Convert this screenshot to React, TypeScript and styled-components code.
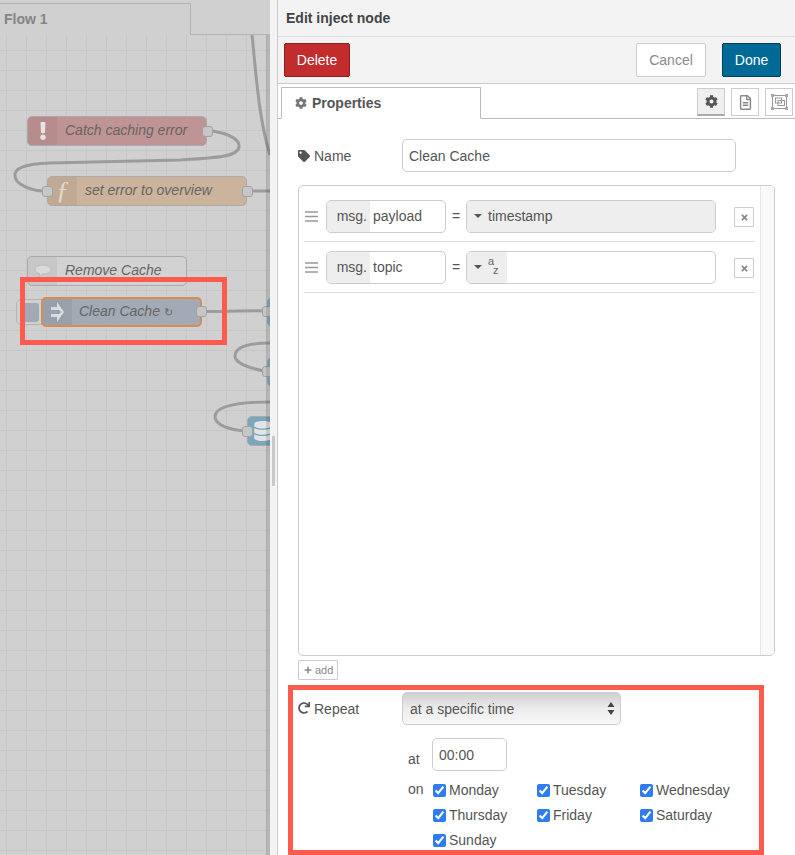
import React from 'react';
import styled, { createGlobalStyle } from 'styled-components';
import {
  FaCog,
  FaDatabase,
  FaExclamation,
  FaPlus,
  FaRedo,
  FaRegFileAlt,
  FaTag,
  FaTimes,
} from 'react-icons/fa';

const GlobalStyle = createGlobalStyle`
  html, body {
    margin: 0;
    padding: 0;
    background: #fff;
  }
  body {
    font-family: "Liberation Sans", Arial, sans-serif;
    font-size: 14px;
    color: #555;
  }
  * {
    box-sizing: border-box;
  }
`;

const Page = styled.div`
  position: relative;
  display: flex;
  width: 795px;
  height: 855px;
  overflow: hidden;
`;

/* ---------- workspace (dimmed behind the tray) ---------- */

const Workspace = styled.div`
  display: flex;
  flex-direction: column;
  width: 270px;
  flex-shrink: 0;
  background: #d0d0d0;
`;

const FlowTabs = styled.div`
  display: flex;
  align-items: flex-end;
  height: 35px;
  padding-top: 3px;
  border-bottom: 1px solid #b4b4b4;
  flex-shrink: 0;
`;

const FlowTab = styled.div`
  width: 191px;
  height: 32px;
  margin-bottom: -1px;
  padding: 7px 0 0 4px;
  border-top: 1px solid #b4b4b4;
  border-right: 1px solid #b4b4b4;
  background: #d0d0d0;
  font-weight: bold;
  color: #858585;
`;

const Canvas = styled.div`
  position: relative;
  flex: 1;
  overflow: hidden;
  background-color: #d0d0d0;
  background-image: linear-gradient(#c7c7c7 1px, transparent 1px),
    linear-gradient(90deg, #c7c7c7 1px, transparent 1px);
  background-size: 20px 20px;
  background-position: 6px 15px;
  &::after {
    content: '';
    position: absolute;
    top: 0;
    right: 0;
    bottom: 0;
    width: 4px;
    background: rgba(0, 0, 0, 0.12);
  }
`;

const Wires = styled.svg`
  position: absolute;
  left: 0;
  top: -35px;
  width: 270px;
  height: 855px;
  fill: none;
  stroke: #9c9c9c;
  stroke-width: 3;
`;

interface NodeProps {
  $x: number;
  $y: number;
  $w: number;
  $bg: string;
  $border?: string;
}

const FlowNode = styled.div<NodeProps>`
  position: absolute;
  left: ${(p) => p.$x}px;
  top: ${(p) => p.$y - 35}px;
  width: ${(p) => p.$w}px;
  height: 30px;
  display: flex;
  align-items: center;
  background: ${(p) => p.$bg};
  border: ${(p) => (p.$border ? `2px solid ${p.$border}` : '1px solid #aaa')};
  border-radius: 5px;
`;

const NodeIcon = styled.div`
  display: flex;
  align-items: center;
  justify-content: center;
  align-self: stretch;
  width: 29px;
  flex-shrink: 0;
  background: rgba(0, 0, 0, 0.05);
  border-radius: 4px 0 0 4px;
  color: #e4e4e4;
`;

const NodeLabel = styled.span`
  margin-left: 8px;
  padding-bottom: 2px;
  font-style: italic;
  color: #666;
  white-space: nowrap;
`;

const SelectedIconLabel = styled(NodeLabel)`
  margin-left: 7px;
`;

const LoopMark = styled.span`
  font-size: 11px;
  font-style: normal;
`;

const FunctionGlyph = styled.span`
  font-family: "Liberation Serif", serif;
  font-style: italic;
  font-size: 26px;
  line-height: 1;
  color: #e2d9cd;
`;

const Port = styled.div<{ $x: number; $y: number }>`
  position: absolute;
  left: ${(p) => p.$x}px;
  top: ${(p) => p.$y - 35}px;
  width: 11px;
  height: 11px;
  background: #c6c6c6;
  border: 1px solid #a2a2a2;
  border-radius: 3px;
`;

const InjectButton = styled.div`
  position: absolute;
  left: 16px;
  top: 264px;
  width: 28px;
  height: 26px;
  padding: 3px 0 0 5px;
  background: #d0d0d0;
  border: 1px solid #b4b4b4;
  border-radius: 5px 0 0 5px;
`;

const InjectFace = styled.div`
  width: 17px;
  height: 19px;
  background: #a1aab5;
  border-radius: 3px;
`;

const Gutter = styled.div`
  position: relative;
  width: 8px;
  flex-shrink: 0;
  background: #f3f3f3;
  border-right: 1px solid #ccc;
`;

const GutterGrip = styled.div`
  position: absolute;
  left: 2px;
  top: 436px;
  width: 3px;
  height: 50px;
  background: #c9c9c9;
`;

/* ---------- edit tray ---------- */

const Tray = styled.div`
  display: flex;
  flex-direction: column;
  flex: 1;
  min-width: 0;
  background: #fff;
`;

const TrayTitle = styled.div`
  height: 37px;
  padding: 10px 0 0 8px;
  background: #f3f3f3;
  border-bottom: 1px solid #ddd;
  font-weight: bold;
  font-size: 14px;
  color: #444;
`;

const TrayToolbar = styled.div`
  display: flex;
  align-items: center;
  justify-content: space-between;
  height: 47px;
  padding: 0 14px 1px 6px;
  background: #f3f3f3;
  border-bottom: 1px solid #ccc;
`;

const ToolbarGroup = styled.div`
  display: flex;
  gap: 16px;
`;

const TrayButton = styled.button<{ $kind: 'delete' | 'cancel' | 'done' }>`
  height: 34px;
  padding: 0;
  font-family: inherit;
  font-size: 14px;
  border-radius: 2px;
  width: ${(p) => (p.$kind === 'delete' ? 66 : p.$kind === 'cancel' ? 70 : 59)}px;
  background: ${(p) =>
    p.$kind === 'delete' ? '#c22c2c' : p.$kind === 'cancel' ? '#fff' : '#006a97'};
  color: ${(p) => (p.$kind === 'cancel' ? '#8a8a8a' : '#fff')};
  border: 1px solid
    ${(p) => (p.$kind === 'delete' ? '#8f1f1f' : p.$kind === 'cancel' ? '#ccc' : '#00405c')};
`;

const TabRow = styled.div`
  display: flex;
  align-items: flex-end;
  justify-content: space-between;
  height: 35px;
  padding: 0 2px 0 3px;
  border-bottom: 1px solid #bbb;
`;

const PropertiesTab = styled.div`
  display: flex;
  align-items: center;
  gap: 5px;
  width: 200px;
  height: 32px;
  margin-bottom: -1px;
  padding-left: 13px;
  background: #fff;
  border: 1px solid #bbb;
  border-bottom: 1px solid #fff;
  font-weight: bold;
  color: #555;
  svg {
    color: #777;
  }
`;

const TabIcons = styled.div`
  display: flex;
  gap: 6px;
  margin-bottom: 2px;
`;

const TabIcon = styled.div<{ $active?: boolean }>`
  display: flex;
  align-items: center;
  justify-content: center;
  width: 28px;
  height: 28px;
  background: ${(p) => (p.$active ? '#efefef' : '#fff')};
  border: 1px solid #ccc;
  border-bottom: ${(p) => (p.$active ? '2px solid #aaa' : '1px solid #ccc')};
  color: ${(p) => (p.$active ? '#555' : '#888')};
`;

const Form = styled.div`
  flex: 1;
  padding: 20px 20px 0;
`;

const NameRow = styled.div`
  display: flex;
  align-items: center;
  height: 33px;
`;

const RowLabel = styled.label`
  display: flex;
  align-items: center;
  gap: 4px;
  width: 104px;
  flex-shrink: 0;
  color: #555;
`;

const TextInput = styled.input<{ $width: number }>`
  width: ${(p) => p.$width}px;
  height: 33px;
  padding: 0 6px;
  font-family: inherit;
  font-size: 14px;
  color: #555;
  background: #fff;
  border: 1px solid #ccc;
  border-radius: 5px;
  outline: none;
`;

const ListBox = styled.div`
  display: flex;
  height: 471px;
  margin-top: 13px;
  width: 477px;
  border: 1px solid #ccc;
  border-radius: 5px;
  overflow: hidden;
`;

const ListContent = styled.div`
  flex: 1;
  padding: 5px 5px 0;
`;

const ListScrollbar = styled.div`
  width: 15px;
  background: #f9f9f9;
  border-left: 1px solid #e6e6e6;
`;

const PropRow = styled.div`
  display: flex;
  align-items: center;
  height: 51px;
  padding: 0 1px;
  border-bottom: 1px solid #ddd;
`;

const DragHandle = styled.svg`
  width: 13px;
  height: 11px;
  margin-right: 8px;
  flex-shrink: 0;
  stroke: #999;
  stroke-width: 1.4;
`;

const FieldBox = styled.div<{ $width: number }>`
  display: flex;
  align-items: stretch;
  width: ${(p) => p.$width}px;
  height: 33px;
  flex-shrink: 0;
  border: 1px solid #ccc;
  border-radius: 5px;
  overflow: hidden;
  color: #555;
`;

const MsgPrefix = styled.div`
  display: flex;
  align-items: center;
  justify-content: flex-end;
  width: 43px;
  padding-right: 3px;
  background: #eee;
`;

const FieldValue = styled.div`
  display: flex;
  align-items: center;
  flex: 1;
  padding-left: 3px;
`;

const Equals = styled.div`
  width: 20px;
  flex-shrink: 0;
  text-align: center;
  color: #555;
`;

const TypeButton = styled.div<{ $fill?: boolean }>`
  display: flex;
  align-items: center;
  gap: 6px;
  padding-left: 7px;
  background: #eee;
  flex: ${(p) => (p.$fill ? 1 : '0 0 40px')};
`;

const Caret = styled.span`
  width: 0;
  height: 0;
  border-left: 4px solid transparent;
  border-right: 4px solid transparent;
  border-top: 4px solid #555;
`;

const TypeGlyph = styled.span`
  display: flex;
  flex-direction: column;
  margin-top: -2px;
  font-size: 11px;
  line-height: 9px;
  color: #666;
  span:last-child {
    margin-left: 5px;
  }
`;

const RemoveButton = styled.button`
  display: flex;
  align-items: center;
  justify-content: center;
  width: 20px;
  height: 20px;
  margin: 2px 0 0 18px;
  padding: 0;
  background: #fff;
  border: 1px solid #ccc;
  border-radius: 1px;
  color: #888;
`;

const AddButton = styled.button`
  display: flex;
  align-items: center;
  gap: 3px;
  width: 40px;
  height: 20px;
  margin-top: 4px;
  padding: 0 0 0 5px;
  font-family: inherit;
  font-size: 11px;
  color: #888;
  background: #fff;
  border: 1px solid #ccc;
  border-radius: 1px;
`;

const RepeatRow = styled.div`
  display: flex;
  margin-top: 12px;
`;

const RepeatLabel = styled(RowLabel)`
  align-items: flex-start;
  padding-top: 9px;
  svg {
    margin-top: 1px;
  }
`;

const SelectWrap = styled.div`
  position: relative;
  width: 219px;
  height: 33px;
`;

const RepeatSelect = styled.select`
  appearance: none;
  width: 100%;
  height: 100%;
  padding: 0 7px;
  font-family: inherit;
  font-size: 14px;
  color: #555;
  background: linear-gradient(#cfcfcf, #ececec 50%, #f8f8f8);
  border: 1px solid #ccc;
  border-radius: 5px;
  outline: none;
`;

const SelectArrows = styled.svg`
  position: absolute;
  right: 6px;
  top: 10px;
  width: 8px;
  height: 13px;
  fill: #444;
  pointer-events: none;
`;

const AtRow = styled.div`
  display: flex;
  align-items: center;
  margin: 13px 0 0 110px;
`;

const InlineLabel = styled.span`
  width: 24px;
  flex-shrink: 0;
`;

const AtLabel = styled(InlineLabel)`
  padding-top: 8px;
`;

const OnRow = styled.div`
  display: flex;
  margin: 6px 0 0 110px;
`;

const OnLabel = styled(InlineLabel)`
  line-height: 25px;
`;

const DaysGrid = styled.div`
  display: grid;
  grid-template-columns: 104px 103px 110px;
  grid-auto-rows: 25px;
`;

const Day = styled.label`
  display: flex;
  align-items: center;
  gap: 3px;
  white-space: nowrap;
  color: #555;
  input {
    width: 13px;
    height: 13px;
    margin: 1px 0 0 1px;
    accent-color: #2f7bf0;
  }
`;

const Highlight = styled.div<{ $x: number; $y: number; $w: number; $h: number }>`
  position: absolute;
  left: ${(p) => p.$x}px;
  top: ${(p) => p.$y}px;
  width: ${(p) => p.$w}px;
  height: ${(p) => p.$h}px;
  border: 5px solid #ff5a4e;
  pointer-events: none;
`;

const DAYS = ['Monday', 'Tuesday', 'Wednesday', 'Thursday', 'Friday', 'Saturday', 'Sunday'];

const FrameIcon = () => (
  <svg width="17" height="16" viewBox="0 0 17 16" fill="none" stroke="#999" strokeWidth="1">
    <rect x="1.500" y="1.500" width="14" height="13" />
    <rect x="4.500" y="4" width="6" height="5" />
    <rect x="7" y="6.500" width="6.500" height="5" />
    <rect x="0" y="0" width="3" height="3" fill="#aaa" stroke="none" />
    <rect x="14" y="0" width="3" height="3" fill="#aaa" stroke="none" />
    <rect x="0" y="13" width="3" height="3" fill="#aaa" stroke="none" />
    <rect x="14" y="13" width="3" height="3" fill="#aaa" stroke="none" />
  </svg>
);

const InjectArrow = () => (
  <svg width="13" height="20" viewBox="0 0 13 20" fill="#dcdcdc">
    <path d="M0 5h6V0l7 10-7 10v-5H0v-3h8l2-2-2-2H0z" />
  </svg>
);

const CommentBubble = () => (
  <svg width="18" height="14" viewBox="0 0 18 14" fill="#dadada" stroke="#bbb">
    <path d="M9 1c4.400 0 8 1.700 8 4.500S13.400 10 9 10H8l-3 3 .5-3.500C3 9 1 7.500 1 5.500 1 2.700 4.600 1 9 1z" />
  </svg>
);

const Handle = () => (
  <DragHandle viewBox="0 0 13 11">
    <path d="M0 1h13M0 5.500h13M0 10h13" />
  </DragHandle>
);

const App: React.FC = () => {
  return (
    <Page>
      <GlobalStyle />
      <Workspace>
        <FlowTabs>
          <FlowTab>Flow 1</FlowTab>
        </FlowTabs>
        <Canvas>
          <Wires viewBox="0 0 270 855">
            <path d="M252 34C256 75 259 120 270 155" />
            <path d="M212 131C232 134 240 141 239 147C238 157 215 158 180 160L50 163C25 164 14 168 15 176C15 184 30 190 42 191" />
            <path d="M252 191H270" />
            <path d="M206 311.500C230 312 250 310 267 311" />
            <path d="M270 343C245 343 235 348 235 356C235 364 250 368 264 371" />
            <path d="M270 402C240 402 215 405 215 417C215 425 230 430 246 431" />
          </Wires>

          <FlowNode $x={27} $y={116} $w={180} $bg="#c09495">
            <NodeIcon>
              <FaExclamation size={18} />
            </NodeIcon>
            <NodeLabel>Catch caching error</NodeLabel>
          </FlowNode>
          <Port $x={202} $y={126} />

          <FlowNode $x={47} $y={176} $w={200} $bg="#ccb39b">
            <NodeIcon>
              <FunctionGlyph>ƒ</FunctionGlyph>
            </NodeIcon>
            <NodeLabel>set error to overview</NodeLabel>
          </FlowNode>
          <Port $x={42} $y={186} />
          <Port $x={242} $y={186} />

          <FlowNode $x={27} $y={256} $w={160} $bg="#d2d2d2">
            <NodeIcon>
              <CommentBubble />
            </NodeIcon>
            <NodeLabel>Remove Cache</NodeLabel>
          </FlowNode>

          <InjectButton>
            <InjectFace />
          </InjectButton>
          <FlowNode $x={41} $y={297} $w={161} $bg="#a1aab5" $border="#d58c55">
            <NodeIcon>
              <InjectArrow />
            </NodeIcon>
            <SelectedIconLabel>
              Clean Cache <LoopMark>↻</LoopMark>
            </SelectedIconLabel>
          </FlowNode>
          <Port $x={196} $y={306} />

          <FlowNode $x={267} $y={297} $w={60} $bg="#7fb0c9" />
          <Port $x={262} $y={306} />
          <FlowNode $x={267} $y={357} $w={60} $bg="#7fb0c9" />
          <Port $x={262} $y={366} />
          <FlowNode $x={247} $y={416} $w={60} $bg="#7fb0c9">
            <NodeIcon>
              <FaDatabase size={20} />
            </NodeIcon>
          </FlowNode>
          <Port $x={242} $y={426} />
        </Canvas>
      </Workspace>

      <Gutter>
        <GutterGrip />
      </Gutter>

      <Tray>
        <TrayTitle>Edit inject node</TrayTitle>
        <TrayToolbar>
          <TrayButton $kind="delete">Delete</TrayButton>
          <ToolbarGroup>
            <TrayButton $kind="cancel">Cancel</TrayButton>
            <TrayButton $kind="done">Done</TrayButton>
          </ToolbarGroup>
        </TrayToolbar>

        <TabRow>
          <PropertiesTab>
            <FaCog size={12} />
            Properties
          </PropertiesTab>
          <TabIcons>
            <TabIcon $active>
              <FaCog size={13} />
            </TabIcon>
            <TabIcon>
              <FaRegFileAlt size={15} />
            </TabIcon>
            <TabIcon>
              <FrameIcon />
            </TabIcon>
          </TabIcons>
        </TabRow>

        <Form>
          <NameRow>
            <RowLabel>
              <FaTag size={12} />
              Name
            </RowLabel>
            <TextInput $width={334} defaultValue="Clean Cache" />
          </NameRow>

          <ListBox>
            <ListContent>
              <PropRow>
                <Handle />
                <FieldBox $width={120}>
                  <MsgPrefix>msg.</MsgPrefix>
                  <FieldValue>payload</FieldValue>
                </FieldBox>
                <Equals>=</Equals>
                <FieldBox $width={250}>
                  <TypeButton $fill>
                    <Caret />
                    timestamp
                  </TypeButton>
                </FieldBox>
                <RemoveButton>
                  <FaTimes size={9} />
                </RemoveButton>
              </PropRow>
              <PropRow>
                <Handle />
                <FieldBox $width={120}>
                  <MsgPrefix>msg.</MsgPrefix>
                  <FieldValue>topic</FieldValue>
                </FieldBox>
                <Equals>=</Equals>
                <FieldBox $width={250}>
                  <TypeButton>
                    <Caret />
                    <TypeGlyph>
                      <span>a</span>
                      <span>z</span>
                    </TypeGlyph>
                  </TypeButton>
                  <FieldValue />
                </FieldBox>
                <RemoveButton>
                  <FaTimes size={9} />
                </RemoveButton>
              </PropRow>
            </ListContent>
            <ListScrollbar />
          </ListBox>

          <AddButton>
            <FaPlus size={8} />
            add
          </AddButton>

          <RepeatRow>
            <RepeatLabel>
              <FaRedo size={12} />
              Repeat
            </RepeatLabel>
            <SelectWrap>
              <RepeatSelect defaultValue="time">
                <option value="time">at a specific time</option>
              </RepeatSelect>
              <SelectArrows viewBox="0 0 8 13">
                <path d="M4 0l3.500 5H.5zM4 13L.5 8h7z" />
              </SelectArrows>
            </SelectWrap>
          </RepeatRow>

          <AtRow>
            <AtLabel>at</AtLabel>
            <TextInput $width={75} defaultValue="00:00" />
          </AtRow>

          <OnRow>
            <OnLabel>on</OnLabel>
            <DaysGrid>
              {DAYS.map((day) => (
                <Day key={day}>
                  <input type="checkbox" defaultChecked />
                  {day}
                </Day>
              ))}
            </DaysGrid>
          </OnRow>
        </Form>
      </Tray>

      <Highlight $x={20} $y={277} $w={207} $h={68} />
      <Highlight $x={288} $y={685} $w={476} $h={170} />
    </Page>
  );
};

export default App;
